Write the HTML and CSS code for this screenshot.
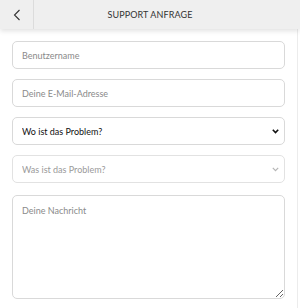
FILE: index.html
```html
<!DOCTYPE html>
<html lang="de">
<head>
    <meta charset="UTF-8">
    <title>Support Anfrage</title>
    <link rel="stylesheet" href="styles.css">
</head>
<body>

<!-- Kopfzeile -->
<header class="topbar">
    <button class="back" type="button" aria-label="Zurück">
        <svg width="8" height="12" viewBox="0 0 8 12">
            <path d="M6.5 1 L1.5 6 L6.5 11" fill="none" stroke="#333" stroke-width="1.1"/>
        </svg>
    </button>
    <h1 class="title">Support Anfrage</h1>
    <span class="spacer"></span>
</header>

<!-- Formular -->
<main class="page">
    <form class="support-form">
        <input class="field" type="text" placeholder="Benutzername">
        <input class="field" type="email" placeholder="Deine E-Mail-Adresse">
        <div class="select-wrap">
            <select class="field select">
                <option>Wo ist das Problem?</option>
            </select>
            <svg class="chevron" width="7" height="5" viewBox="0 0 7 5">
                <path d="M0.8 0.8 L3.5 3.6 L6.2 0.8" fill="none" stroke="#111" stroke-width="1.6"/>
            </svg>
        </div>
        <div class="select-wrap">
            <select class="field select" disabled>
                <option>Was ist das Problem?</option>
            </select>
            <svg class="chevron" width="7" height="5" viewBox="0 0 7 5">
                <path d="M0.8 0.8 L3.5 3.6 L6.2 0.8" fill="none" stroke="#b5b5b5" stroke-width="1.2"/>
            </svg>
        </div>
        <textarea class="field message" placeholder="Deine Nachricht"></textarea>
    </form>
</main>

</body>
</html>
```

FILE: styles.css
```css
body {
    margin: 0;
    background: #fff;
    color: #222;
    font-family: Lato, "Open Sans", Arial, sans-serif;
}

.topbar {
    display: grid;
    grid-template-columns: 34px 1fr 34px;
    align-items: center;
    height: 29px;
    background: #efefef;
    box-shadow: 0 2px 5px rgba(0, 0, 0, 0.12);
    position: relative;
    z-index: 1;
}

.back {
    height: 100%;
    border: 0;
    border-right: 1px solid #dcdcdc;
    background: transparent;
    padding: 0;
    display: flex;
    align-items: center;
    justify-content: center;
}

.title {
    margin: 0;
    text-align: center;
    font-size: 9px;
    font-weight: normal;
    text-transform: uppercase;
    color: #333;
    letter-spacing: 0.1px;
}

.page {
    width: 298px;
    min-height: 279px;
    border-right: 1px solid #ececec;
    box-sizing: border-box;
    padding: 12px 12px 0;
}

.support-form {
    display: flex;
    flex-direction: column;
    gap: 10px;
}

.field {
    box-sizing: border-box;
    width: 100%;
    height: 28px;
    margin: 0;
    padding: 0 9px;
    border: 1px solid #d9d9d9;
    border-radius: 5px;
    background: #fff;
    font-family: Lato, "Open Sans", Arial, sans-serif;
    font-size: 9px;
    color: #222;
    outline: none;
}

.field::placeholder {
    color: #8a8a8a;
}

.select-wrap {
    position: relative;
}

.select {
    display: block;
    appearance: none;
    -webkit-appearance: none;
    color: #111;
}

.select:disabled {
    color: #9a9a9a;
    background: #fff;
    border-color: #e2e2e2;
    opacity: 1;
}

.chevron {
    position: absolute;
    right: 6px;
    top: 12px;
    pointer-events: none;
}

.message {
    height: 104px;
    margin-top: 2px;
    padding: 9px;
    resize: vertical;
}
```
